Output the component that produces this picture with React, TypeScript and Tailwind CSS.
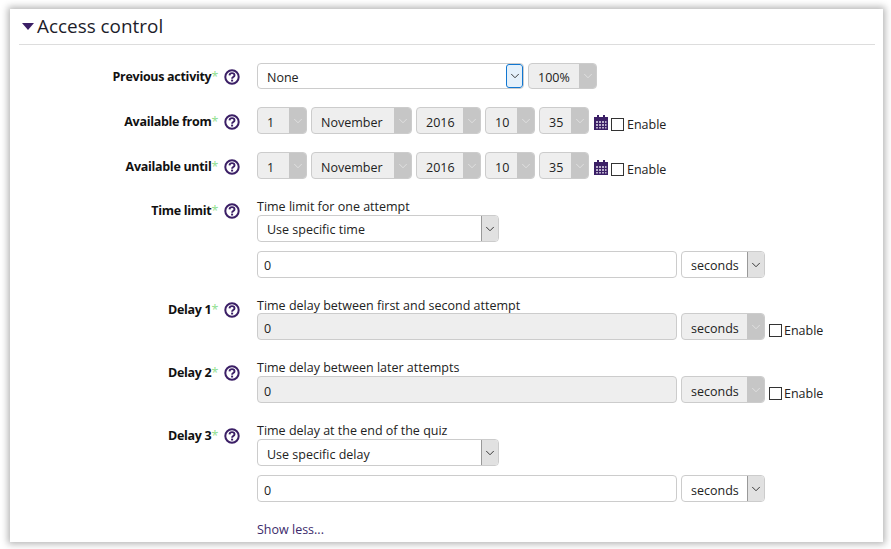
import { ChevronDown } from 'lucide-react'
import type { ReactNode } from 'react'

function HelpIcon() {
  return (
    <svg width="16" height="16" viewBox="0 0 16 16" className="shrink-0">
      <circle cx="8" cy="8" r="6.7" fill="none" stroke="#3b1f66" strokeWidth="2" />
      <path d="M5.5 6.4C5.6 4.8 6.7 4.1 8 4.1c1.5 0 2.5.8 2.5 2.1 0 1.9-2.3 1.8-2.4 3.5" fill="none" stroke="#3b1f66" strokeWidth="1.9" />
      <rect x="7.1" y="10.6" width="2" height="1.9" fill="#3b1f66" />
    </svg>
  )
}

function CalendarIcon() {
  return (
    <svg width="14" height="15" viewBox="0 0 14 15" className="mt-[4px] ml-[1px] shrink-0">
      <path d="M0 2h14v13H0z" fill="#3b1f66" />
      <path d="M3 0h2v3H3zM9 0h2v3H9z" fill="#3b1f66" />
      <path d="M2 6h2v2H2zM5 6h2v2H5zM8 6h2v2H8zM11 6h1.5v2H11zM2 9h2v2H2zM5 9h2v2H5zM8 9h2v2H8zM11 9h1.5v2H11zM2 12h2v1.6H2zM5 12h2v1.6H5zM8 12h2v1.6H8zM11 12h1.5v1.6H11z" fill="#b9aecb" />
    </svg>
  )
}

function Select({ value, width, disabled, focused, height = 'h-[27px]', lead = 'leading-[30px]' }: { value: string; width: string; disabled?: boolean; focused?: boolean; height?: string; lead?: string }) {
  return (
    <div className={`flex shrink-0 overflow-hidden rounded-[4px] border border-[#ccc] ${height} ${width} ${disabled ? 'bg-[#eee]' : 'bg-white'}`}>
      <span className={`flex-1 pl-[9px] whitespace-nowrap ${lead}`}>{value}</span>
      {focused ? (
        <span className="flex w-[17px] items-center justify-center rounded-[3px] border border-[#1177d1] bg-[#e5f1fb]">
          <ChevronDown size={14} color="#222" strokeWidth={1.5} />
        </span>
      ) : disabled ? (
        <span className="flex w-[17px] items-center justify-center bg-[#c6c6c6]">
          <ChevronDown size={14} color="#e2e2e2" strokeWidth={1.5} />
        </span>
      ) : (
        <span className="flex w-[17px] items-center justify-center border-l border-[#999] bg-[#e1e1e1]">
          <ChevronDown size={14} color="#222" strokeWidth={1.5} />
        </span>
      )}
    </div>
  )
}

function Input({ disabled, lead = 'leading-[30px]' }: { disabled?: boolean; lead?: string }) {
  return (
    <div className={`h-[27px] w-[420px] shrink-0 rounded-[4px] border border-[#ccc] pl-[6px] ${lead} ${disabled ? 'bg-[#eee]' : 'bg-white'}`}>0</div>
  )
}

function Enable({ gap = 'gap-[2px]' }: { gap?: string }) {
  return (
    <div className={`flex h-[27px] items-end pb-[1px] ${gap}`}>
      <span className="mb-[2px] h-[13px] w-[13px] border border-[#333] bg-white" />
      <span className="leading-[16px]">Enable</span>
    </div>
  )
}

function Row({ label, className, labelTop = 'pt-[6px]', iconTop = 'pt-[7px]', children }: { label: string; className: string; labelTop?: string; iconTop?: string; children: ReactNode }) {
  return (
    <div className={`flex ${className}`}>
      <div className="flex w-[238px] shrink-0 items-start">
        <div className={`w-[199px] text-right font-bold tracking-[-0.3px] whitespace-nowrap text-[#111] ${labelTop}`}>
          {label}
          <span className="font-normal text-[#8fe08f]">*</span>
        </div>
        <div className={`ml-[6px] ${iconTop}`}>
          <HelpIcon />
        </div>
      </div>
      <div className="flex-1">{children}</div>
    </div>
  )
}

function DateSelects() {
  return (
    <div className="flex items-center gap-[4px]">
      <Select value="1" width="w-[50px]" disabled />
      <Select value="November" width="w-[101px]" disabled />
      <Select value="2016" width="w-[65px]" disabled />
      <Select value="10" width="w-[50px]" disabled />
      <Select value="35" width="w-[50px]" disabled />
      <div className="flex items-center gap-[3px]">
        <CalendarIcon />
        <Enable gap="gap-[3px]" />
      </div>
    </div>
  )
}

function Caption({ top = 'pt-[1px]', children }: { top?: string; children: ReactNode }) {
  return <div className={`h-[18px] leading-[18px] ${top}`}>{children}</div>
}

export default function App() {
  return (
    <div className="h-[549px] w-[891px] overflow-hidden bg-white pt-[9px] pl-[10px] font-['Open_Sans',sans-serif] text-[12.5px] text-[#222]">
      <div className="h-[533px] w-[873px] bg-white px-[9px] shadow-[0_0_7px_2px_rgba(0,0,0,0.3)]">
        <div className="flex h-[36px] w-[856px] items-center border-b border-[#ddd]">
          <svg width="12" height="7" viewBox="0 0 12 7" className="ml-[3px] shrink-0">
            <path d="M0 0h12L6 7z" fill="#3b1f66" />
          </svg>
          <span className="ml-[3px] text-[18.9px] text-[#1d1d2b]">Access control</span>
        </div>

        <Row label="Previous activity" className="mt-[18px]" labelTop="pt-[5px]" iconTop="pt-[6px]">
          <div className="flex gap-[4px]">
            <Select value="None" width="w-[267px]" height="h-[26px]" lead="leading-[28px]" focused />
            <Select value="100%" width="w-[69px]" height="h-[26px]" lead="leading-[28px]" disabled />
          </div>
        </Row>

        <Row label="Available from" className="mt-[18px]">
          <DateSelects />
        </Row>

        <Row label="Available until" className="mt-[18px]">
          <DateSelects />
        </Row>

        <Row label="Time limit" className="mt-[18px]" labelTop="pt-[5px]" iconTop="pt-[6px]">
          <Caption>Time limit for one attempt</Caption>
          <Select value="Use specific time" width="w-[242px]" lead="leading-[28px]" />
          <div className="mt-[9px] flex gap-[4px]">
            <Input lead="leading-[28px]" />
            <Select value="seconds" width="w-[84px]" lead="leading-[28px]" />
          </div>
        </Row>

        <Row label="Delay 1" className="mt-[17px]">
          <Caption top="pt-[2px]">Time delay between first and second attempt</Caption>
          <div className="flex items-center gap-[4px]">
            <Input disabled />
            <Select value="seconds" width="w-[84px]" disabled />
            <Enable />
          </div>
        </Row>

        <Row label="Delay 2" className="mt-[18px]">
          <Caption>Time delay between later attempts</Caption>
          <div className="flex items-center gap-[4px]">
            <Input disabled />
            <Select value="seconds" width="w-[84px]" disabled />
            <Enable />
          </div>
        </Row>

        <Row label="Delay 3" className="mt-[18px]">
          <Caption>Time delay at the end of the quiz</Caption>
          <Select value="Use specific delay" width="w-[242px]" />
          <div className="mt-[9px] flex gap-[4px]">
            <Input />
            <Select value="seconds" width="w-[84px]" />
          </div>
        </Row>

        <div className="mt-[19px] ml-[238px] text-[#3b2a6b]">Show less...</div>
      </div>
    </div>
  )
}
